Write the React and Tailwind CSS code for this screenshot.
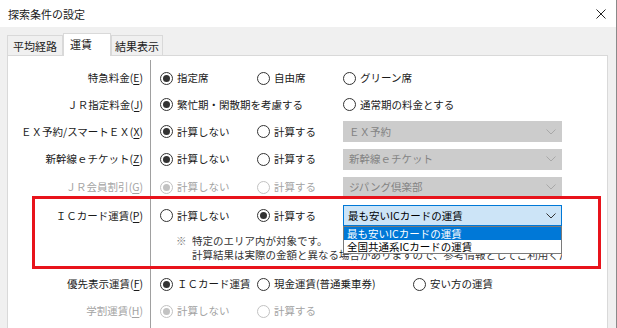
import React from 'react';

const Radio = ({ checked, disabled, label, className = '' }) => (
  <div className={`flex items-center gap-[4px] shrink-0 ${className} ${disabled ? 'text-[#a3a3a3]' : 'text-[#1a1a1a]'}`}>
    <span
      className={`w-[13px] h-[13px] rounded-full border flex items-center justify-center bg-white ${
        disabled ? 'border-[#c2c2c2]' : 'border-[#333333]'
      }`}
    >
      {checked && <span className={`w-[7px] h-[7px] rounded-full ${disabled ? 'bg-[#c2c2c2]' : 'bg-[#333333]'}`} />}
    </span>
    <span className="whitespace-nowrap">{label}</span>
  </div>
);

const Chevron = ({ color }) => (
  <svg width="10" height="6" viewBox="0 0 10 6" fill="none">
    <polyline points="0.5,0.5 5,5 9.5,0.5" stroke={color} strokeWidth="1" />
  </svg>
);

const Select = ({ value, focused }) =>
  focused ? (
    <div className="w-[219px] h-[21px] border border-[#0078d7] bg-[#cce4f7] text-black flex items-center justify-between pl-[4px] pr-[5px]">
      <span className="whitespace-nowrap">{value}</span>
      <Chevron color="#333333" />
    </div>
  ) : (
    <div className="w-[219px] h-[21px] border border-[#cccccc] bg-[#cccccc] text-[#838383] flex items-center justify-between pl-[5px] pr-[5px]">
      <span className="whitespace-nowrap">{value}</span>
      <Chevron color="#a8a8a8" />
    </div>
  );

const Row = ({ label, accel, disabled, height, children }) => (
  <div className={`flex ${height}`}>
    <div
      className={`w-[143px] shrink-0 border-r border-[#a0a0a0] pr-[7px] flex items-center justify-end whitespace-nowrap ${
        disabled ? 'text-[#a3a3a3]' : 'text-[#1a1a1a]'
      }`}
    >
      {label}(<span className="underline underline-offset-2">{accel}</span>)
    </div>
    <div className="flex items-center pl-[9px]">{children}</div>
  </div>
);

export default function App() {
  return (
    <div className="relative w-[617px] h-[328px] overflow-hidden bg-[#f0f0f0] border-r border-[#8a8a8a] font-['Meiryo_UI','Noto_Sans_CJK_JP',sans-serif] text-[10.5px] leading-[14px]">
      {/* title bar */}
      <div className="h-[27px] bg-white flex items-center justify-between pl-[8px] pr-[10px]">
        <span className="text-[#1a1a1a] text-[11px]">探索条件の設定</span>
        <svg width="10" height="10" viewBox="0 0 10 10">
          <path d="M0.5 0.5 L9.5 9.5 M9.5 0.5 L0.5 9.5" stroke="#222" strokeWidth="1" />
        </svg>
      </div>

      {/* tabs */}
      <div className="h-[28px] flex items-end pl-[7px] text-[#1a1a1a] text-[11px]">
        <div className="w-[56px] h-[20px] border border-b-0 border-[#d9d9d9] bg-[#f0f0f0] flex items-center justify-center">
          平均経路
        </div>
        <div className="relative z-10 w-[48px] h-[23px] -mb-px border border-b-0 border-[#d9d9d9] bg-white pl-[6px] pt-[3px]">
          運賃
        </div>
        <div className="w-[52px] h-[20px] border border-b-0 border-[#d9d9d9] bg-[#f0f0f0] flex items-center justify-center">
          結果表示
        </div>
      </div>

      {/* panel */}
      <div className="ml-[7px] w-[601px] h-[290px] border border-[#d9d9d9] bg-white">
        <div className="h-[4px]" />
        <div className="flex h-[5px]">
          <div className="w-[143px] border-r border-[#a0a0a0]" />
        </div>

        <Row label="特急料金" accel="E" height="h-[26px]">
          <Radio checked label="指定席" className="w-[97px]" />
          <Radio label="自由席" className="w-[86px]" />
          <Radio label="グリーン席" />
        </Row>

        <Row label="ＪＲ指定料金" accel="J" height="h-[27px]">
          <Radio checked label="繁忙期・閑散期を考慮する" className="w-[183px]" />
          <Radio label="通常期の料金とする" />
        </Row>

        <Row label="ＥＸ予約/スマートＥＸ" accel="X" height="h-[27px]">
          <Radio checked label="計算しない" className="w-[97px]" />
          <Radio label="計算する" className="w-[86px]" />
          <Select value="ＥＸ予約" />
        </Row>

        <Row label="新幹線ｅチケット" accel="Z" height="h-[28px]">
          <Radio checked label="計算しない" className="w-[97px]" />
          <Radio label="計算する" className="w-[86px]" />
          <Select value="新幹線ｅチケット" />
        </Row>

        <Row label="ＪＲ会員割引" accel="G" disabled height="h-[28px]">
          <Radio checked disabled label="計算しない" className="w-[97px]" />
          <Radio disabled label="計算する" className="w-[86px]" />
          <Select value="ジパング倶楽部" />
        </Row>

        <Row label="ＩＣカード運賃" accel="P" height="h-[29px]">
          <Radio label="計算しない" className="w-[97px]" />
          <Radio checked label="計算する" className="w-[86px]" />
          <div className="relative">
            <Select value="最も安いICカードの運賃" focused />
            <div className="absolute left-0 top-[21px] z-20 w-[219px] border border-[#7a7a7a] bg-white text-black">
              <div className="h-[13px] leading-[13px] pl-[3px] bg-[#0078d7] text-white whitespace-nowrap">最も安いICカードの運賃</div>
              <div className="h-[13px] leading-[13px] pl-[3px] whitespace-nowrap">全国共通系ICカードの運賃</div>
            </div>
          </div>
        </Row>

        {/* notes */}
        <div className="flex h-[41px]">
          <div className="w-[143px] shrink-0 border-r border-[#a0a0a0]" />
          <div className="flex pl-[25px] pt-[4px] text-[#333333]">
            <span className="w-[16px] text-[#777777]">※</span>
            <div className="w-[370px] overflow-hidden whitespace-nowrap">
              <div>特定のエリア内が対象です。</div>
              <div>計算結果は実際の金額と異なる場合がありますので、参考情報としてご利用ください</div>
            </div>
          </div>
        </div>

        <Row label="優先表示運賃" accel="F" height="h-[26px]">
          <Radio checked label="ＩＣカード運賃" className="w-[97px]" />
          <Radio label="現金運賃(普通乗車券)" className="w-[156px]" />
          <Radio label="安い方の運賃" />
        </Row>

        <Row label="学割運賃" accel="H" disabled height="h-[28px]">
          <Radio checked disabled label="計算しない" className="w-[97px]" />
          <Radio disabled label="計算する" className="w-[86px]" />
        </Row>

        <div className="flex h-[40px]">
          <div className="w-[143px] border-r border-[#a0a0a0]" />
        </div>
      </div>

      {/* annotation */}
      <div className="absolute left-[32px] top-[196px] w-[569px] h-[73px] border-[3px] border-[#e8131b] pointer-events-none" />
    </div>
  );
}
